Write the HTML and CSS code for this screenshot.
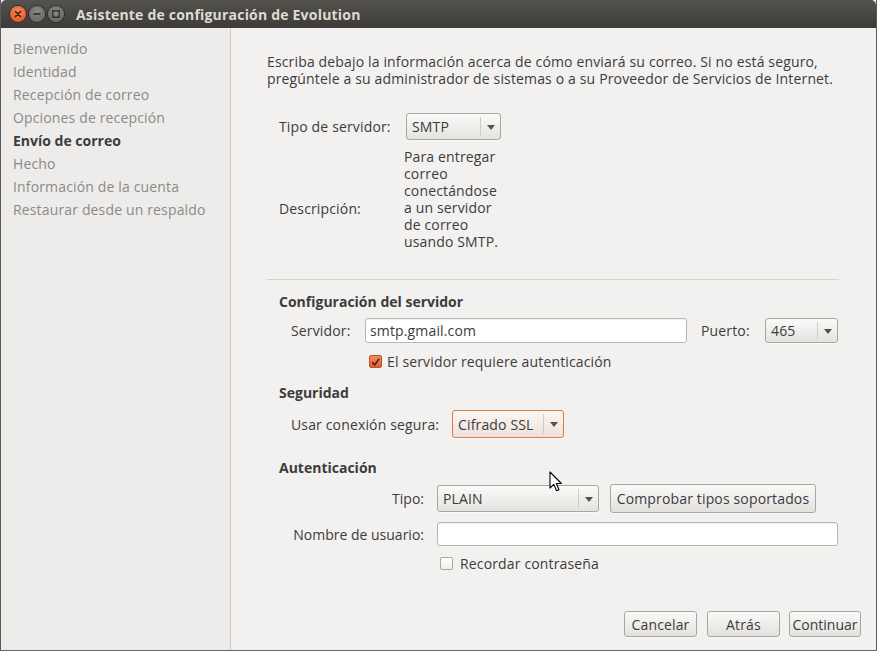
FILE: index.html
```html
<!DOCTYPE html>
<html lang="es">
<head>
<meta charset="utf-8">
<title>Asistente de configuración de Evolution</title>
<link rel="stylesheet" href="styles.css">
</head>
<body>
<div class="window">
  <div class="titlebar">
    <div class="wbtns">
      <span class="wbtn close"><svg width="16" height="16" viewBox="0 0 16 16"><path d="M5.5 5.5 L10.5 10.5 M10.5 5.5 L5.5 10.5" stroke="#3a1c10" stroke-width="1.6" stroke-linecap="round"/></svg></span>
      <span class="wbtn"><svg width="16" height="16" viewBox="0 0 16 16"><path d="M4.5 8 H11.5" stroke="#2e2d2a" stroke-width="1.6"/></svg></span>
      <span class="wbtn"><svg width="16" height="16" viewBox="0 0 16 16"><rect x="4.8" y="4.8" width="6.4" height="6.4" fill="none" stroke="#2e2d2a" stroke-width="1.4"/></svg></span>
    </div>
    <div class="title">Asistente de configuración de Evolution</div>
  </div>
  <div class="body">
    <nav class="sidebar">
      <div class="step">Bienvenido</div>
      <div class="step">Identidad</div>
      <div class="step">Recepción de correo</div>
      <div class="step">Opciones de recepción</div>
      <div class="step current">Envío de correo</div>
      <div class="step">Hecho</div>
      <div class="step">Información de la cuenta</div>
      <div class="step">Restaurar desde un respaldo</div>
    </nav>
    <main class="main">
      <p class="intro">Escriba debajo la información acerca de cómo enviará su correo. Si no está seguro, pregúntele a su administrador de sistemas o a su Proveedor de Servicios de Internet.</p>

      <div class="type-row">
        <span class="type-label">Tipo de servidor:</span>
        <div class="combo w-smtp"><span class="combo-text">SMTP</span><span class="combo-arrow"></span></div>
      </div>
      <div class="desc-row">
        <span class="desc-label">Descripción:</span>
        <span class="desc-text">Para entregar correo conectándose a un servidor de correo usando SMTP.</span>
      </div>

      <div class="separator"></div>

      <h3 class="section">Configuración del servidor</h3>
      <div class="row server-row">
        <span class="lbl-server">Servidor:</span>
        <div class="entry w-server">smtp.gmail.com</div>
        <span class="lbl-port">Puerto:</span>
        <div class="combo w-port"><span class="combo-text">465</span><span class="combo-arrow"></span></div>
      </div>
      <label class="check-row auth-check">
        <span class="check checked"><svg width="13" height="13" viewBox="0 0 13 13"><path d="M3 6.5 L5.5 9.5 L10.5 2.5" fill="none" stroke="#3a2a20" stroke-width="1.8" stroke-linecap="round" stroke-linejoin="round"/></svg></span>
        <span>El servidor requiere autenticación</span>
      </label>

      <h3 class="section sec-sec">Seguridad</h3>
      <div class="row secure-row">
        <span class="lbl-secure">Usar conexión segura:</span>
        <div class="combo focused w-ssl"><span class="combo-text">Cifrado SSL</span><span class="combo-arrow"></span></div>
      </div>

      <h3 class="section sec-auth">Autenticación</h3>
      <div class="auth-grid">
        <span class="glabel">Tipo:</span>
        <div class="tipo-ctl">
          <div class="combo w-plain"><span class="combo-text">PLAIN</span><span class="combo-arrow"></span></div>
          <button class="btn check-btn">Comprobar tipos soportados</button>
        </div>
        <span class="glabel">Nombre de usuario:</span>
        <div class="entry w-user"></div>
        <span></span>
        <label class="check-row remember">
          <span class="check"></span>
          <span>Recordar contraseña</span>
        </label>
      </div>

      <div class="footer">
        <button class="btn w-cancel">Cancelar</button>
        <button class="btn w-back">Atrás</button>
        <button class="btn w-next">Continuar</button>
      </div>
    </main>
  </div>
  <svg class="cursor" width="14" height="22" viewBox="0 0 14 22"><path d="M1 1 L1 17 L4.8 13.4 L7.6 19.8 L10 18.8 L7.3 12.5 L12.4 12.5 Z" fill="#ffffff" stroke="#000" stroke-width="1.1" stroke-linejoin="round"/></svg>
</div>
</body>
</html>
```

FILE: styles.css
```css
* { box-sizing: border-box; }
html, body { margin: 0; padding: 0; }
body {
  font-family: "Open Sans", "DejaVu Sans", sans-serif;
  font-size: 14px;
  letter-spacing: 0.15px;
  color: #3c3c3c;
  background: #f2f1f0;
}
.window {
  position: relative;
  width: 877px;
  height: 651px;
  display: flex;
  flex-direction: column;
  background: #f2f1f0;
  border-left: 1px solid #5a5955;
  border-right: 1px solid #5a5955;
  border-bottom: 1px solid #6a6964;
  overflow: hidden;
}
.titlebar {
  height: 28px;
  flex: none;
  display: flex;
  align-items: center;
  background: linear-gradient(#53524d, #3c3b37);
  border-radius: 5px 5px 0 0;
}
.wbtns { display: flex; gap: 3px; margin-left: 9px; }
.wbtn {
  width: 16px; height: 16px; border-radius: 50%;
  background: radial-gradient(circle at 50% 35%, #8a8984, #5f5e5a);
  box-shadow: 0 0 0 1px #2f2e2b;
  display: flex;
}
.wbtn.close { background: radial-gradient(circle at 50% 35%, #f88b5e, #df4a16); }
.title {
  margin-left: 12px;
  font-weight: bold;
  font-size: 14px;
  letter-spacing: 0.2px;
  color: #dfdbd2;
}
.body { flex: 1; display: flex; min-height: 0; }
.sidebar {
  width: 230px;
  flex: none;
  border-right: 1px solid #cdcac5;
  background: #edeceb;
  padding: 9px 0 0 12px;
}
.step { line-height: 23px; color: #8c8a86; }
.step.current { color: #3c3c3c; font-weight: bold; letter-spacing: 0; }
.main {
  flex: 1;
  min-width: 0;
  display: flex;
  flex-direction: column;
  padding: 25px 37px 13px 36px;
}
.intro { margin: 0 -30px 0 0; line-height: 17px; max-width: 595px; }
.type-row {
  margin-top: 26px;
  margin-left: 12px;
  height: 27px;
  display: flex;
  align-items: center;
}
.type-label { width: 127px; }
.desc-row {
  margin-top: 8px;
  margin-left: 12px;
  display: flex;
}
.desc-label { width: 125px; margin-top: 52px; line-height: 17px; }
.desc-text { width: 100px; line-height: 17px; }
.separator {
  margin-top: 29px;
  height: 1px;
  background: #d5d2cd;
  flex: none;
}
.section {
  margin: 13px 0 0 12px;
  font-size: 14px;
  font-weight: bold;
  letter-spacing: 0;
  line-height: 17px;
}
.sec-sec { margin-top: 14px; }
.sec-auth { margin-top: 21px; }
.row { display: flex; align-items: center; margin-left: 24px; }
.server-row { margin-top: 8px; height: 25px; }
.lbl-server { width: 74px; }
.lbl-port { margin-left: 14px; width: 64px; }
.entry {
  height: 25px;
  background: #ffffff;
  border: 1px solid #b9b6b0;
  border-radius: 3px;
  box-shadow: inset 0 1px 1px rgba(0,0,0,0.06);
  padding: 0 4px;
  line-height: 23px;
  color: #3c3c3c;
}
.w-server { width: 322px; }
.w-user { width: 401px; height: 24px; line-height: 22px; }
.combo {
  height: 25px;
  display: flex;
  align-items: stretch;
  background: linear-gradient(#fafaf9, #e4e3e0);
  border: 1px solid #aaa7a1;
  border-radius: 3px;
  box-shadow: 0 1px 0 rgba(255,255,255,0.6);
}
.combo-text { flex: 1; padding-left: 5px; display: flex; align-items: center; white-space: nowrap; }
.combo-arrow {
  width: 20px;
  flex: none;
  position: relative;
  border-left: 1px solid #cfccc7;
  margin: 3px 0;
}
.combo-arrow::after {
  content: "";
  position: absolute;
  left: 6px; top: 50%;
  margin-top: -2px;
  border-left: 4px solid transparent;
  border-right: 4px solid transparent;
  border-top: 5px solid #55534f;
}
.w-smtp { width: 95px; height: 27px; }
.w-port { width: 73px; }
.w-ssl { width: 112px; height: 28px; }
.w-plain { width: 162px; height: 27px; }
.combo.focused {
  border-color: #e0784a;
  background: linear-gradient(#fbf7f4, #ede1da);
}
.check-row {
  display: flex;
  align-items: center;
  gap: 5px;
  line-height: 17px;
}
.auth-check { margin: 10px 0 0 102px; height: 17px; }
.check {
  width: 13px; height: 13px;
  border: 1px solid #a9a59f;
  border-radius: 2px;
  background: linear-gradient(#ffffff, #efeeec);
  display: flex;
  flex: none;
}
.check.checked {
  border-color: #b8512a;
  background: linear-gradient(#f58a5c, #e2602d);
}
.secure-row { margin-top: 9px; height: 28px; }
.lbl-secure { width: 161px; }
.auth-grid {
  margin: 8px 0 0 24px;
  display: grid;
  grid-template-columns: 146px auto;
  grid-template-rows: 29px 24px 17px;
  row-gap: 9px;
}
.glabel {
  text-align: right;
  padding-right: 13px;
  align-self: center;
  white-space: nowrap;
  letter-spacing: 0;
}
.tipo-ctl { display: flex; align-items: center; gap: 11px; }
.remember { margin-left: 3px; gap: 7px; }
.btn {
  font-family: inherit;
  font-size: 14px;
  letter-spacing: 0.15px;
  color: #3c3c3c;
  height: 26px;
  padding: 0;
  background: linear-gradient(#fafaf9, #e2e1de);
  border: 1px solid #a9a69f;
  border-radius: 3px;
  box-shadow: 0 1px 0 rgba(255,255,255,0.6);
  white-space: nowrap;
}
.check-btn { height: 29px; width: 206px; }
.footer {
  margin-top: auto;
  display: flex;
  justify-content: flex-end;
  gap: 10px;
  margin-right: -22px;
}
.w-cancel { width: 73px; }
.w-back { width: 73px; }
.w-next { width: 72px; margin-left: -1px; letter-spacing: 0; }
.cursor { position: absolute; left: 548px; top: 471px; }
```
